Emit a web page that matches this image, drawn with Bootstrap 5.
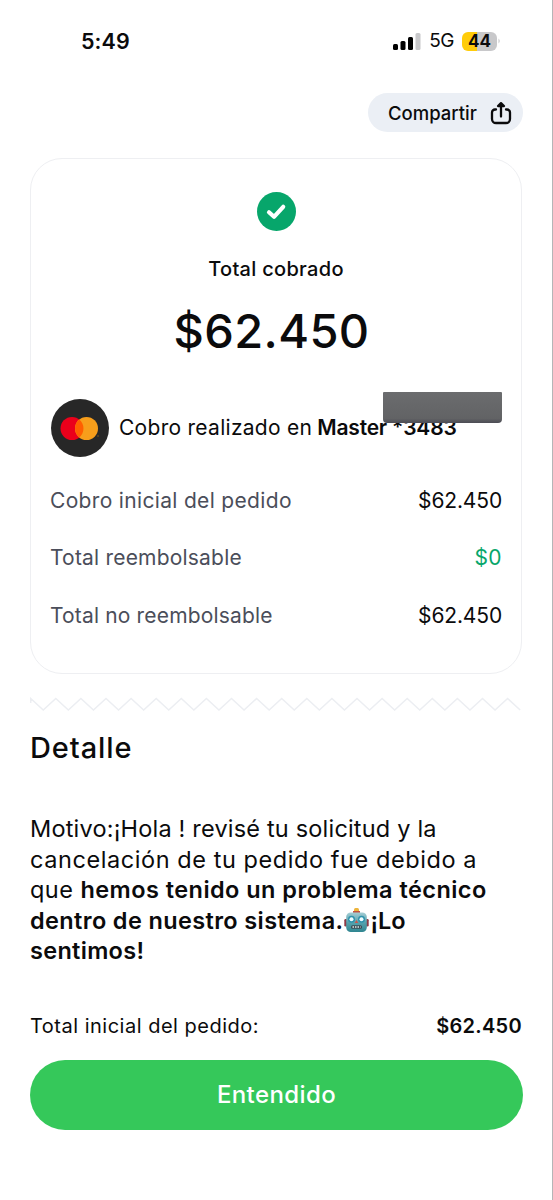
<!DOCTYPE html>
<html lang="es">
<head>
<meta charset="utf-8">
<meta name="viewport" content="width=device-width, initial-scale=1">
<title>Detalle del cobro</title>
<link href="https://cdn.jsdelivr.net/npm/bootstrap@5.3.0/dist/css/bootstrap.min.css" rel="stylesheet">
<style>
body{font-family:Inter,"Liberation Sans",sans-serif;color:#0b0b0c;background:#fff;font-size:21px;line-height:30px;overflow:hidden}
.screen{height:1200px;padding:0 30px;border-right:1px solid #b5b5b7}
.screen > *{flex-shrink:0}
.screen span,.screen h1,.screen h2,.screen p{white-space:nowrap}
.status{height:93px;padding:26px 21px 0 51px}
.clock{font-size:21.5px;font-weight:600;letter-spacing:.1px}
.net{font-size:19px;letter-spacing:-.5px}
.batt{width:35px;height:19px;border-radius:6px;background:linear-gradient(90deg,#ffcc0a 44%,#c8c8ca 44%);font-size:17px;font-weight:700;line-height:19px}
.share{height:39px;width:155px;margin-right:-1px;background:#ebeff5;padding:0 11px 0 20px;font-size:18.5px;font-weight:500;border:0;color:#0b0b0c}
.receipt{height:516px;margin-top:26px;border:1.5px solid #eeeff2;border-radius:32px;padding:33px 20px 0}
.caption{font-size:20px;font-weight:500;letter-spacing:.3px;margin-top:23px}
.amount{font-size:47px;font-weight:500;line-height:60px;letter-spacing:.4px;margin:17px 9px 0 0}
.payrow{height:58px;margin-top:38px}
.pay1{letter-spacing:.28px;margin-left:10px}
.pay2{letter-spacing:-.2px;margin-left:5px}
.cover{left:332px;top:-7px;width:119px;height:31px;background:linear-gradient(#6b6c6e,#626365 85%,#4c4c55);border-radius:1px 1px 4px 4px}
.rows{margin:15px -1px 0}
.rowline{height:57.5px}
.rowlabel{color:#4b4e5a}
.l1{letter-spacing:.33px}.l2{letter-spacing:.2px}.l3{letter-spacing:.16px}
.v1{letter-spacing:-.15px}
.v2{color:#07a66b;letter-spacing:.4px}
.zigzag{margin-top:23px}
.detail-title{font-size:29px;font-weight:500;line-height:40px;letter-spacing:.9px;margin:17px 0 0}
.reason{font-size:23.5px;line-height:30.6px;margin:46px 0 0}
.reason b{font-weight:600}
.r1{letter-spacing:.19px}.r2{letter-spacing:.57px}.r3{letter-spacing:.45px}.r4{letter-spacing:.37px}.r5{letter-spacing:.3px}
.bot{vertical-align:-4px;margin:0 1px}
.totals{margin-top:44px;font-size:20px}
.t1{letter-spacing:.5px}.t2{letter-spacing:.3px}
.ok{height:70px;width:493px;margin-top:19px;background:#35c85a;color:#fff;font-size:24px;font-weight:500;letter-spacing:.4px;border:0}
</style>
</head>
<body>
<main class="screen d-flex flex-column">
  <header class="status d-flex justify-content-between align-items-start">
    <span class="clock">5:49</span>
    <div class="d-flex align-items-center">
      <svg width="28" height="17" viewBox="0 0 28 17"><rect x="0" y="11" width="5" height="6" rx="1.500"/><rect x="7.500" y="8" width="5" height="9" rx="1.500"/><rect x="15" y="4" width="5" height="13" rx="1.500"/><rect x="22.500" y="0" width="5" height="17" rx="1.500" fill="#c8c8ca"/></svg>
      <span class="net ms-2">5G</span>
      <span class="batt text-center ms-2">44</span>
      <svg width="4" height="8" viewBox="0 0 4 8"><path d="M1.500 1.500Q4 4 1.500 6.500Z" fill="#c8c8ca"/></svg>
    </div>
  </header>
  <button class="share rounded-pill d-flex align-items-center justify-content-between align-self-end" type="button">
    <span>Compartir</span>
    <svg width="22" height="24" viewBox="0 0 22 24" fill="none" stroke="#0b0b0c" stroke-width="2.300" stroke-linecap="round" stroke-linejoin="round"><path d="M6 8.500H5a3 3 0 0 0-3 3V18a4 4 0 0 0 4 4h10a4 4 0 0 0 4-4v-6.500a3 3 0 0 0-3-3h-1M11 15.500V3"/><path d="M8 5 11 2.200 14 5Z" fill="#0b0b0c"/></svg>
  </button>
  <section class="receipt">
    <div class="d-flex flex-column align-items-center">
      <svg width="39" height="39" viewBox="0 0 39 39"><circle cx="19.500" cy="19.500" r="19.500" fill="#07a66b"/><path d="m12 20.300 5 4.500 9.200-10" fill="none" stroke="#fff" stroke-width="4.200" stroke-linecap="round" stroke-linejoin="round"/></svg>
      <span class="caption">Total cobrado</span>
      <h1 class="amount">$62.450</h1>
    </div>
    <div class="payrow d-flex align-items-center position-relative">
      <svg width="58" height="58" viewBox="0 0 58 58"><circle cx="29" cy="29" r="29" fill="#272727"/><circle cx="21" cy="29.500" r="11.500" fill="#eb001b"/><circle cx="35.500" cy="29.500" r="11.500" fill="#f79e1b"/><path d="M28.250 20.600a11.500 11.500 0 0 1 0 17.800a11.500 11.500 0 0 1 0-17.800" fill="#ff5f00"/><circle cx="47" cy="37" r=".8" fill="#8a5a16"/></svg>
      <span class="pay1">Cobro realizado en</span>
      <span class="pay2 fw-semibold">Master *3483</span>
      <div class="cover position-absolute"></div>
    </div>
    <div class="rows">
      <div class="rowline d-flex justify-content-between align-items-center"><span class="rowlabel l1">Cobro inicial del pedido</span><span class="v1">$62.450</span></div>
      <div class="rowline d-flex justify-content-between align-items-center"><span class="rowlabel l2">Total reembolsable</span><span class="v2">$0</span></div>
      <div class="rowline d-flex justify-content-between align-items-center"><span class="rowlabel l3">Total no reembolsable</span><span class="v1">$62.450</span></div>
    </div>
  </section>
  <svg class="zigzag" width="492" height="14" viewBox="0 0 492 14"><path id="zig" fill="none" stroke="#eceef2" stroke-width="1.500"/></svg>
  <h2 class="detail-title">Detalle</h2>
  <p class="reason"><span class="r1">Motivo:¡Hola ! revisé tu solicitud y la</span><br><span class="r2">cancelación de tu pedido fue debido a</span><br><span class="r3">que <b>hemos tenido un problema técnico</b></span><br><b class="r4">dentro de nuestro sistema.</b><svg class="bot" width="25" height="26" viewBox="0 0 25 26"><defs><linearGradient id="face" x2="0" y2="1"><stop stop-color="#a5cdd4"/><stop offset=".5" stop-color="#58a3ae"/><stop offset="1" stop-color="#2f8590"/></linearGradient></defs><rect x=".3" y="12" width="3" height="7.500" rx="1.300" fill="#8d3a46"/><rect x="21.700" y="12" width="3" height="7.500" rx="1.300" fill="#8d3a46"/><rect x="10" y="1" width="5" height="5" rx="1.500" fill="#edb43c"/><rect x="9" y="4" width="7" height="2.500" fill="#c3523f"/><rect x="2.200" y="5.500" width="20.600" height="19.500" rx="4.500" fill="url(#face)"/><circle cx="7.500" cy="12.300" r="3.500" fill="#2f93ad"/><circle cx="17.500" cy="12.300" r="3.500" fill="#2f93ad"/><circle cx="7.500" cy="12.300" r="2" fill="#eefcff"/><circle cx="17.500" cy="12.300" r="2" fill="#eefcff"/><path d="m12.500 13 1.800 3h-3.600z" fill="#c9564a"/><rect x="7" y="18.300" width="11" height="3.400" rx="1.500" fill="#3c4d56"/><path d="M8.500 20h8" stroke="#d7e7e8" stroke-width="1.500" stroke-dasharray="1.500 1"/></svg><b>¡Lo</b><br><b class="r5">sentimos!</b></p>
  <div class="totals d-flex justify-content-between"><span class="t1">Total inicial del pedido:</span><span class="t2 fw-semibold">$62.450</span></div>
  <button class="ok rounded-pill" type="button">Entendido</button>
</main>
<script src="https://cdn.jsdelivr.net/npm/bootstrap@5.3.0/dist/js/bootstrap.bundle.min.js"></script>
<script>
let d = 'M.7 6V1.500';
for (let i = 0; i < 40; i++) d += 'L' + (.7 + i * 12.55) + ' ' + (i % 2 ? 13 : 1.500);
document.getElementById('zig').setAttribute('d', d);
</script>
</body>
</html>
